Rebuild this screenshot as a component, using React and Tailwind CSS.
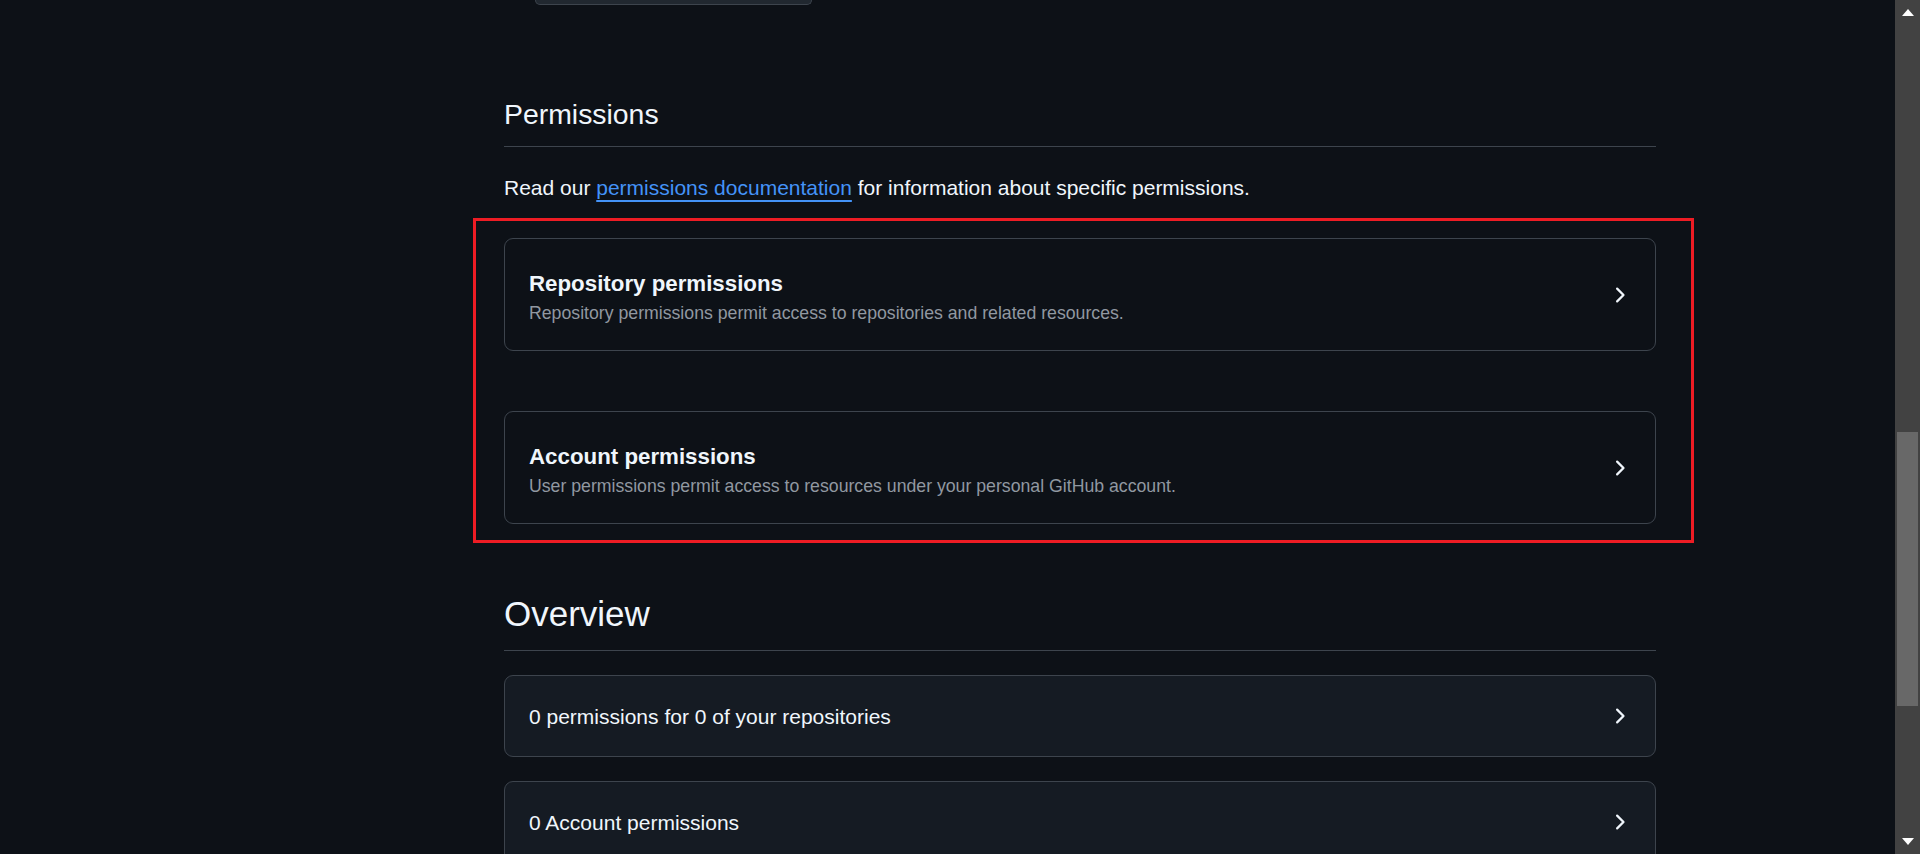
const font = { fontFamily: '"Liberation Sans", Arial, sans-serif' };

const ChevronRight = () => (
  <svg width="24" height="24" viewBox="0 0 16 16" fill="#f0f6fc" className="shrink-0">
    <path d="M6.22 3.22a.75.75 0 0 1 1.06 0l4.25 4.25a.75.75 0 0 1 0 1.06l-4.25 4.25a.751.751 0 0 1-1.042-.018.751.751 0 0 1-.018-1.042L9.94 8 6.22 4.28a.75.75 0 0 1 0-1.06Z" />
  </svg>
);

const PermissionCard = ({ title, description }) => (
  <button className="w-full h-[113px] flex items-center justify-between pl-6 pr-6 border border-[#3d444d] rounded-[9px] bg-[#0d1117] text-left">
    <div className="pt-[4px]">
      <div className="text-[22.3px] leading-[33px] font-bold text-[#f0f6fc]">{title}</div>
      <div className="text-[17.7px] leading-[27px] text-[#9198a1]">{description}</div>
    </div>
    <ChevronRight />
  </button>
);

const OverviewCard = ({ label }) => (
  <button className="w-full h-[82px] shrink-0 flex items-center justify-between pl-6 pr-6 border border-[#3d444d] rounded-[9px] bg-[#151b23] text-left">
    <span className="pt-[1px] text-[21px] leading-[31.5px] text-[#f0f6fc]">{label}</span>
    <ChevronRight />
  </button>
);

const Scrollbar = () => (
  <div className="w-[25px] h-full bg-[#424242] flex flex-col shrink-0">
    <div className="h-[25px] flex items-center justify-center">
      <svg width="12" height="7" viewBox="0 0 12 7">
        <polygon points="0,7 6,0 12,7" fill="#ffffff" />
      </svg>
    </div>
    <div className="mt-[407px] h-[274px] mx-[2px] bg-[#686868]" />
    <div className="flex-1" />
    <div className="h-[25px] flex items-center justify-center">
      <svg width="12" height="7" viewBox="0 0 12 7">
        <polygon points="0,0 12,0 6,7" fill="#ffffff" />
      </svg>
    </div>
  </div>
);

export default function App() {
  return (
    <div className="w-full h-[854px] overflow-hidden flex bg-[#0d1117]" style={font}>
      <div className="flex-1 flex flex-col">
        <div className="h-px w-full bg-[#454545]" />
        <div className="pl-[504px]">
          <div className="w-[1152px] flex flex-col">
            {/* bottom edge of the control above, cut off by the viewport */}
            <div className="ml-[31px] w-[277px] h-[5px] rounded-b-[7px] border border-t-0 border-[#3d444d] bg-[#212830]" />

            <h2 className="mt-[88px] pb-[11px] border-b border-[#3d444d] text-[28.4px] leading-[42px] font-normal text-[#f0f6fc]">
              Permissions
            </h2>

            <p className="mt-[25px] text-[21px] leading-[32px] text-[#f0f6fc]">
              Read our{' '}
              <a href="#" className="text-[#4493f8] underline underline-offset-[5px] decoration-[1.5px]">
                permissions documentation
              </a>{' '}
              for information about specific permissions.
            </p>

            <div className="relative mt-[34px] flex flex-col gap-[60px]">
              <PermissionCard
                title="Repository permissions"
                description="Repository permissions permit access to repositories and related resources."
              />
              <PermissionCard
                title="Account permissions"
                description="User permissions permit access to resources under your personal GitHub account."
              />
              {/* red highlight annotation */}
              <div className="absolute -top-[20px] -left-[31px] w-[1221px] h-[325px] border-[3px] border-[#ed1c24] pointer-events-none" />
            </div>

            <h2 className="mt-[64px] pb-[10px] border-b border-[#3d444d] text-[35px] leading-[52px] font-normal text-[#f0f6fc]">
              Overview
            </h2>

            <div className="mt-[24px] flex flex-col gap-[24px]">
              <OverviewCard label="0 permissions for 0 of your repositories" />
              <OverviewCard label="0 Account permissions" />
            </div>
          </div>
        </div>
      </div>
      <Scrollbar />
    </div>
  );
}
